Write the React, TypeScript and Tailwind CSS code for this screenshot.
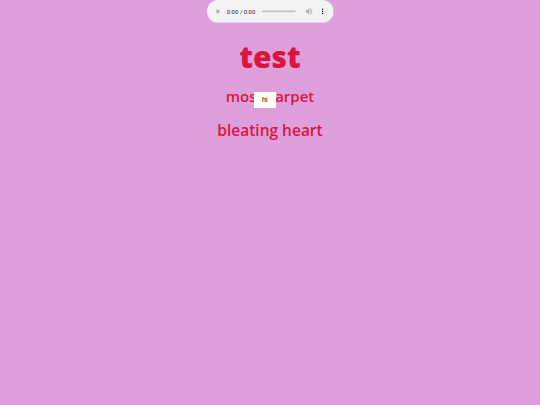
export default function App() {
  return (
    <main className="min-h-[405px] bg-[#dda0dd] font-['Open_Sans',sans-serif] text-[#dc143c]">
      <div className="flex flex-col items-center">
        <div className="h-[23px] w-[127px] overflow-hidden">
          <audio controls className="h-[54px] w-[300px] origin-top-left scale-[0.422]" />
        </div>
        <h1 className="mt-[14px] text-[30px] font-extrabold leading-[40px]">test</h1>
        <div className="relative mt-[8px]">
          <p className="text-[15px] font-semibold leading-[22px]">moss carpet</p>
          <div className="absolute left-[28px] top-[7px] flex h-[16px] w-[22px] items-center justify-center bg-white font-['Liberation_Sans',sans-serif] text-[7px] text-[#000]">
            <span className="text-[#000]">hi</span>
          </div>
        </div>
        <p className="mt-[12px] text-[15.5px] font-semibold leading-[22px]">bleating heart</p>
      </div>
    </main>
  );
}
